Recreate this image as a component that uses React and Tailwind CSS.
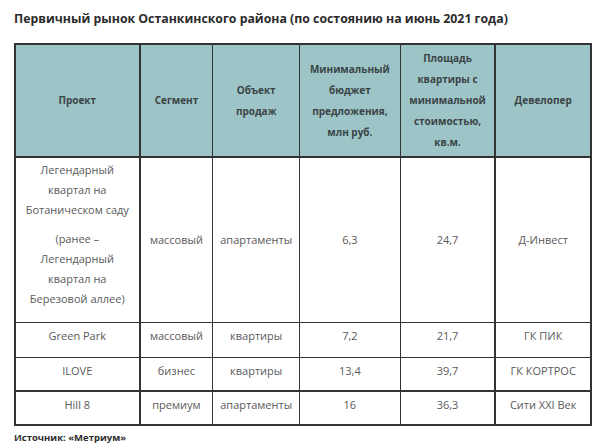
import React from "react";

const rows = [
  {
    p: (
      <>
        <div>Легендарный</div>
        <div>квартал на</div>
        <div>Ботаническом саду</div>
        <div className="mt-[9px]">(ранее –</div>
        <div>Легендарный</div>
        <div>квартал на</div>
        <div>Березовой аллее)</div>
      </>
    ),
    s: "массовый",
    o: "апартаменты",
    b: "6,3",
    a: "24,7",
    d: "Д-Инвест",
    h: "h-[166px]",
    top: "border-t-2",
  },
  { p: "Green Park", s: "массовый", o: "квартиры", b: "7,2", a: "21,7", d: "ГК ПИК", h: "h-[35px]", top: "border-t" },
  { p: "ILOVE", s: "бизнес", o: "квартиры", b: "13,4", a: "39,7", d: "ГК КОРТРОС", h: "h-[33px]", top: "border-t" },
  { p: "Hill 8", s: "премиум", o: "апартаменты", b: "16", a: "36,3", d: "Сити XXI Век", h: "h-[34px]", top: "border-t-2" },
];

const cols = ["w-[125px]", "w-[73px]", "w-[87px]", "w-[101px]", "w-[96px]", "w-[94px]"];

function Cell({ children, i, extra = "" }) {
  const side = i === 0 ? "border-r-2" : i === 4 ? "border-r-2" : i === 5 ? "" : "border-r";
  return (
    <div className={`${cols[i]} ${side} border-[#333] flex flex-col items-center justify-center text-center ${extra}`}>
      {children}
    </div>
  );
}

export default function App() {
  return (
    <div className="w-[605px] h-[448px] bg-white pl-[14px] pt-[11px]" style={{ fontFamily: '"Open Sans", "Noto Sans", sans-serif' }}>
      <div className="text-[12.3px] font-bold text-[#2b2b2b] leading-[16px]">
        Первичный рынок Останкинского района (по состоянию на июнь 2021 года)
      </div>
      <div className="mt-[16px] w-[578px] border-2 border-[#333]">
        <div className="flex h-[111px] bg-[#9dc4c7] text-[10px] font-bold text-[#3a4446] leading-[21px]">
          <Cell i={0}>Проект</Cell>
          <Cell i={1}>Сегмент</Cell>
          <Cell i={2}>
            <div>Объект</div>
            <div>продаж</div>
          </Cell>
          <Cell i={3}>
            <div>Минимальный</div>
            <div>бюджет</div>
            <div>предложения,</div>
            <div>млн руб.</div>
          </Cell>
          <Cell i={4}>
            <div>Площадь</div>
            <div>квартиры с</div>
            <div>минимальной</div>
            <div>стоимостью,</div>
            <div>кв.м.</div>
          </Cell>
          <Cell i={5}>Девелопер</Cell>
        </div>
        {rows.map((r, k) => (
          <div key={k} className={`flex ${r.h} ${r.top} border-[#333] text-[11px] text-[#5a5a5a] leading-[20px]`}>
            <Cell i={0} extra={k === 0 ? "justify-start pt-[2px]" : "justify-start pt-[3px]"}>{r.p}</Cell>
            <Cell i={1} extra={k === 0 ? "" : "justify-start pt-[3px]"}>{r.s}</Cell>
            <Cell i={2} extra={k === 0 ? "" : "justify-start pt-[3px]"}>{r.o}</Cell>
            <Cell i={3} extra={k === 0 ? "" : "justify-start pt-[3px]"}>{r.b}</Cell>
            <Cell i={4} extra={k === 0 ? "" : "justify-start pt-[3px]"}>{r.a}</Cell>
            <Cell i={5} extra={k === 0 ? "" : "justify-start pt-[3px]"}>{r.d}</Cell>
          </div>
        ))}
      </div>
      <div className="mt-[5px] text-[9.5px] font-bold text-[#2b2b2b]">Источник: «Метриум»</div>
    </div>
  );
}
